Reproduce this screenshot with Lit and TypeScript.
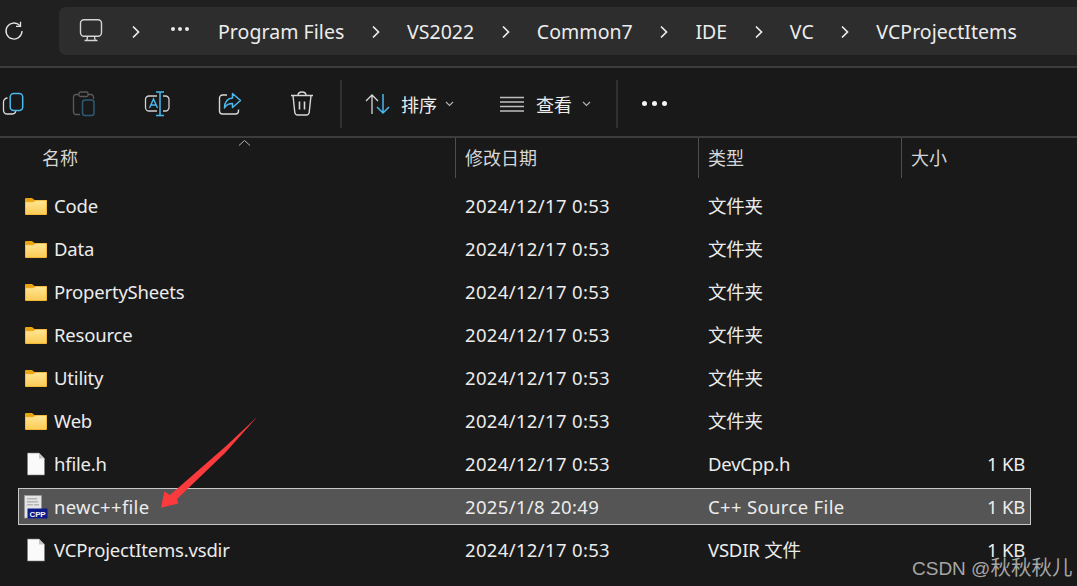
import { LitElement, html, css, svg } from "lit";
import { customElement } from "lit/decorators.js";

const crumbs = ["Program Files", "VS2022", "Common7", "IDE", "VC", "VCProjectItems"];
type Row = { name: string; date: string; type: string; size?: string; icon: "folder" | "doc" | "cpp"; sel?: boolean };
const D = "2024/12/17 0:53";
const rows: Row[] = [
  { name: "Code", date: D, type: "文件夹", icon: "folder" },
  { name: "Data", date: D, type: "文件夹", icon: "folder" },
  { name: "PropertySheets", date: D, type: "文件夹", icon: "folder" },
  { name: "Resource", date: D, type: "文件夹", icon: "folder" },
  { name: "Utility", date: D, type: "文件夹", icon: "folder" },
  { name: "Web", date: D, type: "文件夹", icon: "folder" },
  { name: "hfile.h", date: D, type: "DevCpp.h", size: "1 KB", icon: "doc" },
  { name: "newc++file", date: "2025/1/8 20:49", type: "C++ Source File", size: "1 KB", icon: "cpp", sel: true },
  { name: "VCProjectItems.vsdir", date: D, type: "VSDIR 文件", size: "1 KB", icon: "doc" },
];

const chevron = html`<svg class="chev" width="10" height="14" viewBox="0 0 10 14"><path d="M2 1.500l5.500 5.500L2 12.500" fill="none" stroke="#ececec" stroke-width="1.700"/></svg>`;
const caret = html`<svg class="caret" width="9" height="6" viewBox="0 0 9 6"><path d="M1 1l3.500 3.500L8 1" fill="none" stroke="#b5b5b5" stroke-width="1.100"/></svg>`;
const BLUE = "#4cb8ee";

const icons: Record<string, unknown> = {
  copy: svg`<svg class="ti" width="24" height="24" viewBox="0 0 24 24" fill="none"><path d="M7.500 6A4 4 0 0 0 3.500 10v8.500A3.500 3.500 0 0 0 7 22h5.500a3.500 3.500 0 0 0 3.300-2.800" stroke="#d8d8d8" stroke-width="1.300"/><rect x="10.200" y="1.500" width="12.500" height="17" rx="3.500" stroke="${BLUE}" stroke-width="1.500"/></svg>`,
  paste: svg`<svg class="ti" width="24" height="26" viewBox="0 0 24 26" fill="none"><path d="M7 3.500H4A2.500 2.500 0 0 0 1.500 6v15A2.500 2.500 0 0 0 4 23.500h4M16 3.500h3A2.500 2.500 0 0 1 21.500 6v2" stroke="#5a5a5a" stroke-width="1.300"/><rect x="7" y="1" width="9" height="4.500" rx="1.500" stroke="#5a5a5a" stroke-width="1.300"/><rect x="10.500" y="9" width="11.500" height="15.500" rx="2.500" stroke="#2c5a75" stroke-width="1.500"/></svg>`,
  rename: svg`<svg class="ti" width="26" height="26" viewBox="0 0 26 26" fill="none"><path d="M13 5H5A3.500 3.500 0 0 0 1.500 8.500v8A3.500 3.500 0 0 0 5 20h8M19 5h2.500A3.500 3.500 0 0 1 25 8.500v8a3.500 3.500 0 0 1-3.500 3.500H19" stroke="#d0d0d0" stroke-width="1.300"/><path d="M12 1h8M12 24.500h8M16 1v23.500" stroke="${BLUE}" stroke-width="1.500"/><path d="M5.500 17L9.500 8l4 9M7 14h5" stroke="${BLUE}" stroke-width="1.400"/></svg>`,
  share: svg`<svg class="ti" width="24" height="24" viewBox="0 0 24 24" fill="none"><path d="M9 3H4.500A3 3 0 0 0 1.500 6v13A3 3 0 0 0 4.500 22h13a3 3 0 0 0 3-3v-1.500" stroke="#d8d8d8" stroke-width="1.400"/><path d="M14.500 1.500L22.500 8.500l-8 7v-4c-4 0-6.500 1.500-8 4.500 0-6 3-9.500 8-10z" stroke="${BLUE}" stroke-width="1.500" stroke-linejoin="round"/></svg>`,
  trash: svg`<svg class="ti" width="24" height="26" viewBox="0 0 24 26" fill="none" stroke="#d8d8d8" stroke-width="1.400"><path d="M1 4.500h22M8 4.500C8 2.500 9.500 1 12 1s4 1.500 4 3.500"/><path d="M3 4.500l1.800 17A3 3 0 0 0 7.800 24h8.400a3 3 0 0 0 3-2.500l1.800-17"/><path d="M9.500 10.500v8M14.500 10.500v8" stroke-width="1.600"/></svg>`,
};

const folder = svg`<svg class="fo" width="22" height="18" viewBox="0 0 22 18"><defs><linearGradient id="fg" x1="0" y1="0" x2="0" y2="1"><stop offset="0" stop-color="#ffe594"/><stop offset="1" stop-color="#fbcb55"/></linearGradient></defs><path d="M0 2a1 1 0 0 1 1-1h6l2.500 2H22v3H0z" fill="#e9a40f"/><path d="M0 4.500h7.500L10 3h11a1 1 0 0 1 1 1v13a1 1 0 0 1-1 1H1a1 1 0 0 1-1-1z" fill="#eeb02a"/><path d="M.7 5.200h7.500l2.500-1.500H21.300V17.300H.7z" fill="url(#fg)"/></svg>`;
const doc = svg`<svg width="24" height="24" viewBox="0 0 24 24"><path d="M3.500 1h11.500l5.500 5.500V23H3.500z" fill="#fafafa" stroke="#7d7d7d" stroke-width=".6"/><path d="M15 1v5.500h5.500z" fill="#c4c4c4"/></svg>`;
const cpp = svg`<svg width="24" height="24" viewBox="0 0 24 24"><rect x="0.500" y="0.500" width="17" height="22.500" fill="#e4e4e4" stroke="#9a9a9a" stroke-width=".6"/><path d="M3 3h10v1.500H3zM3 6h11v1.500H3zM3 9h6v1.500H3zM10 9h5v1.500h-5z" fill="#b4b4b4"/><rect x="3.500" y="13.500" width="20" height="10" fill="#0d1a8a"/><text x="13.500" y="21.500" text-anchor="middle" font-family="Liberation Sans" font-weight="700" font-size="8" fill="#f2f2f2">CPP</text></svg>`;
const rowIcon = { folder, doc, cpp };

@customElement("app-root")
export class AppRoot extends LitElement {
  static styles = css`
    :host {
      display: block; position: relative; width: 1077px; height: 586px; overflow: hidden;
      background: #191919; color: #ececec;
      font-family: "Noto Sans", "Noto Sans CJK SC", sans-serif;
    }
    .top { height: 66px; background: #202020; display: flex; align-items: center; box-sizing: border-box; padding: 0 0 4px 0; }
    .refresh { margin-left: 4px; width: 55px; display: flex; }
    .crumbs { flex: 1; height: 48px; background: #2d2d2d; border-radius: 7px 0 0 7px; display: flex; align-items: center; padding-left: 20px; font-size: 19.500px; color: #ececec; letter-spacing: 0.050px; white-space: nowrap; }
    .pc { display: flex; }
    .chev { flex: none; }
    .crumbs .chev { margin: 1px 26.300px 0 26.300px; }
    .crumbs .chev.first { margin: 1px 0 0 28px; }
    .dots { display: flex; gap: 3px; margin: 0 29px 0 30px; }
    .dots i { width: 4px; height: 4px; background: #e8e8e8; border-radius: 50%; margin-top: -4px; }
    .line { height: 2px; background: #3c3c3c; }
    .toolbar { height: 68px; box-sizing: border-box; padding-top: 3px; display: flex; align-items: center; font-size: 18px; font-family: "Noto Sans CJK SC", sans-serif; }
    .ti { flex: none; }
    .sp48 { width: 48px; flex: none; }
    .sp46 { width: 46px; flex: none; }
    .sep { width: 2px; height: 48px; background: #303030; flex: none; }
    .a { width: 26px; flex: none; }
    .b { width: 23px; flex: none; }
    .c { width: 11px; flex: none; }
    .d { width: 8px; flex: none; }
    .e { width: 12px; flex: none; }
    .f { width: 10px; flex: none; }
    .g { width: 25px; flex: none; }
    .mdots { display: flex; gap: 5px; margin-left: 24px; }
    .mdots i { width: 5px; height: 5px; border-radius: 50%; background: #f4f4f4; }
    .header { height: 40px; display: grid; grid-template-columns: 455px 243px 203px 136px; width: 1037px; position: relative; font-family: "Noto Sans CJK SC", sans-serif; font-size: 18px; color: #d6d6d6; }
    .hc { border-left: 1px solid #4d4d4d; padding-left: 9px; line-height: 38px; box-sizing: border-box; }
    .hc:first-child { border-left: 0; padding-left: 42px; }
    .hc:last-child { border-right: 1px solid #4d4d4d; }
    .sort { position: absolute; left: 238px; top: 1px; }
    .rows { padding: 9px 0 0 18px; display: flex; flex-direction: column; gap: 6px; }
    .row { width: 1013px; height: 37px; box-sizing: border-box; display: grid; grid-template-columns: 438px 243px 203px 123px; align-items: center; font-size: 18.500px; color: #ececec; letter-spacing: -0.200px; white-space: nowrap; }
    .row.sel { background: #555555; outline: 1px solid #c8c8c8; outline-offset: -1px; }
    .name { display: flex; align-items: center; padding-left: 6px; gap: 6px; }
    .name svg { flex: none; }
    .name .fo { margin: 0 1px; }
    .cell { padding-left: 9px; }
    .date { letter-spacing: 0.340px; }
    .up { padding-bottom: 2px; }
    .sel .name span { letter-spacing: 0.300px; }
    .sel .type { letter-spacing: 0.340px; }
    .size { text-align: right; }
    .arrow { position: absolute; left: 0; top: 0; pointer-events: none; }
    .mark { position: absolute; left: 912px; top: 553px; font-family: "Liberation Sans", "Noto Sans CJK SC", sans-serif; font-size: 19px; line-height: 26px; color: #a6a6a6; white-space: nowrap; }
    .mark span { font-size: 20.500px; font-family: "Noto Sans CJK SC", sans-serif; }
  `;

  render() {
    return html`
      <div class="top">
        <div class="refresh">
          <svg width="20" height="20" viewBox="0 0 20 20" fill="none" stroke="#e6e6e6" stroke-width="1.300"><path d="M15.800 4.500A8 8 0 1 0 18 10"/><path d="M16.500 0.800v4.500H12"/></svg>
        </div>
        <div class="crumbs">
          <span class="pc"><svg width="24" height="24" viewBox="0 0 24 24" fill="none" stroke="#d4d4d4" stroke-width="1.400"><rect x="1.500" y="0.800" width="21" height="16.500" rx="3.500"/><path d="M8.500 17.500l-.5 3.500M15.500 17.500l.5 3.500M5.500 21.500h13"/></svg></span>
          <svg class="chev first" width="10" height="14" viewBox="0 0 10 14"><path d="M2 1.500l5.500 5.500L2 12.500" fill="none" stroke="#ececec" stroke-width="1.700"/></svg>
          <span class="dots"><i></i><i></i><i></i></span>
          ${crumbs.map((c, i) => html`<span>${c}</span>${i < crumbs.length - 1 ? chevron : ""}`)}
        </div>
      </div>
      <div class="line"></div>
      <div class="toolbar">
        ${icons.copy}
        <span class="sp48"></span>${icons.paste}
        <span class="sp48"></span>${icons.rename}
        <span class="sp48"></span>${icons.share}
        <span class="sp48"></span>${icons.trash}
        <span class="a"></span><span class="sep"></span>
        <span class="b"></span>
        <svg class="ti" width="25" height="22" viewBox="0 0 25 22" fill="none"><path d="M7 21V2M1 8l6-6 6 6" stroke="#d8d8d8" stroke-width="1.300"/><path d="M18 1v19M12 14l6 6 6-6" stroke="${BLUE}" stroke-width="1.500"/></svg>
        <span class="c"></span><span>排序</span>
        <span class="d"></span>${caret}
        <span class="sp46"></span>
        <svg class="ti" width="24" height="16" viewBox="0 0 24 16" fill="none" stroke="#d0d0d0" stroke-width="1.300"><path d="M0 1.500h24M0 6h24M0 10.500h24M0 15h24" opacity=".9"/></svg>
        <span class="e"></span><span>查看</span>
        <span class="f"></span>${caret}
        <span class="g"></span><span class="sep"></span>
        <span class="mdots"><i></i><i></i><i></i></span>
      </div>
      <div class="line"></div>
      <div class="header">
        <div class="hc">名称</div><div class="hc">修改日期</div><div class="hc">类型</div><div class="hc">大小</div>
        <svg class="sort" width="13" height="8" viewBox="0 0 13 8"><path d="M1 6.500l5.500-5 5.500 5" fill="none" stroke="#b0b0b0" stroke-width="1"/></svg>
      </div>
      <div class="rows">
        ${rows.map(
          (r) => html`<div class="row ${r.sel ? "sel" : ""}">
            <div class="name">${rowIcon[r.icon]}<span>${r.name}</span></div>
            <div class="cell date">${r.date}</div>
            <div class="cell type ${/文/.test(r.type) ? "up" : ""}">${r.type}</div>
            <div class="size">${r.size ?? ""}</div>
          </div>`
        )}
      </div>
      <svg class="arrow" width="1077" height="586" viewBox="0 0 1077 586"><polygon points="257,417 225,453 177,499 178.300,503.500 161,507.700 164.300,491.500 170,495 225,447" fill="#fb3a3e"/></svg>
      <div class="mark">CSDN @<span>秋秋秋儿</span></div>
    `;
  }
}
